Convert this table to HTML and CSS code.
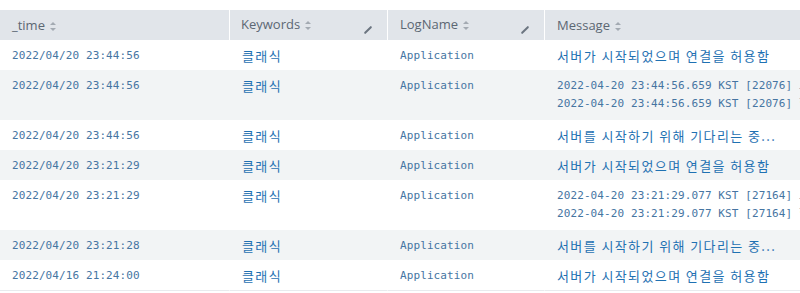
FILE: index.html
```html
<!DOCTYPE html>
<html>
<head>
    <title>Events</title>
    <link rel="stylesheet" href="styles.css">
</head>
<body>
    <div class="results">
        <table class="events">
            <thead>
                <tr>
                    <th class="col-time"><span class="label">_time</span><span class="sort"></span></th>
                    <th class="col-kw"><span class="label">Keywords</span><span class="sort"></span><span class="edit"></span></th>
                    <th class="col-log"><span class="label">LogName</span><span class="sort"></span><span class="edit"></span></th>
                    <th class="col-msg"><span class="label">Message</span><span class="sort"></span></th>
                </tr>
            </thead>
            <tbody>
                <tr>
                    <td class="mono time">2022/04/20 23:44:56</td>
                    <td class="link">클래식</td>
                    <td class="mono app">Application</td>
                    <td class="link">서버가 시작되었으며 연결을 허용함</td>
                </tr>
                <tr class="alt">
                    <td class="mono time">2022/04/20 23:44:56</td>
                    <td class="link">클래식</td>
                    <td class="mono app">Application</td>
                    <td class="mono msg">
                        <div class="line">2022-04-20 23:44:56.659 KST [22076] 로그 출력을 로그 수집 프로세스로 보냄</div>
                        <div class="line">2022-04-20 23:44:56.659 KST [22076] 힌트: 이제부터 로그는 "log" 디렉터리에 저장됨</div>
                    </td>
                </tr>
                <tr>
                    <td class="mono time">2022/04/20 23:44:56</td>
                    <td class="link">클래식</td>
                    <td class="mono app">Application</td>
                    <td class="link">서버를 시작하기 위해 기다리는 중...</td>
                </tr>
                <tr class="alt">
                    <td class="mono time">2022/04/20 23:21:29</td>
                    <td class="link">클래식</td>
                    <td class="mono app">Application</td>
                    <td class="link">서버가 시작되었으며 연결을 허용함</td>
                </tr>
                <tr>
                    <td class="mono time">2022/04/20 23:21:29</td>
                    <td class="link">클래식</td>
                    <td class="mono app">Application</td>
                    <td class="mono msg">
                        <div class="line">2022-04-20 23:21:29.077 KST [27164] 로그 출력을 로그 수집 프로세스로 보냄</div>
                        <div class="line">2022-04-20 23:21:29.077 KST [27164] 힌트: 이제부터 로그는 "log" 디렉터리에 저장됨</div>
                    </td>
                </tr>
                <tr class="alt">
                    <td class="mono time">2022/04/20 23:21:28</td>
                    <td class="link">클래식</td>
                    <td class="mono app">Application</td>
                    <td class="link">서버를 시작하기 위해 기다리는 중...</td>
                </tr>
                <tr class="last">
                    <td class="mono time">2022/04/16 21:24:00</td>
                    <td class="link">클래식</td>
                    <td class="mono app">Application</td>
                    <td class="link">서버가 시작되었으며 연결을 허용함</td>
                </tr>
            </tbody>
        </table>
    </div>
</body>
</html>
```

FILE: styles.css
```css
html, body {
    margin: 0;
    padding: 0;
    background: white;
    overflow: hidden;
}

body {
    padding-top: 10px;
    font-family: 'Open Sans', 'Noto Sans CJK KR', sans-serif;
}

.results {
    width: 800px;
    overflow: hidden;
}

.events {
    table-layout: fixed;
    border-collapse: separate;
    border-spacing: 0;
    width: 1144px;
}

.col-time { width: 229px; }
.col-kw { width: 158px; }
.col-log { width: 157px; }
.col-msg { width: 600px; }

th {
    box-sizing: border-box;
    height: 30px;
    padding: 0 12px;
    background: #e1e5ea;
    color: #5c6773;
    font-size: 13px;
    font-weight: normal;
    text-align: left;
    white-space: nowrap;
}

th.col-kw {
    padding-left: 11px;
}

th + th {
    border-left: 1px solid white;
}

.sort {
    display: inline-block;
    position: relative;
    width: 6px;
    height: 9px;
    margin-left: 5px;
    vertical-align: -1px;
}

.sort::before,
.sort::after {
    content: "";
    position: absolute;
    left: 0;
    border-left: 3px solid transparent;
    border-right: 3px solid transparent;
}

.sort::before {
    top: 0;
    border-bottom: 3.5px solid #a3aab2;
}

.sort::after {
    bottom: 0;
    border-top: 3.5px solid #a3aab2;
}

.edit {
    float: right;
    width: 2px;
    height: 10px;
    margin: 10px 6px 0 0;
    background: #6b7580;
    border-radius: 1px;
    transform: rotate(45deg);
}

td {
    box-sizing: border-box;
    padding: 7px 12px 5px 12px;
    vertical-align: top;
    line-height: 18px;
    white-space: nowrap;
    overflow: hidden;
}

td + td {
    border-left: 1px solid transparent;
}

tr.alt td {
    background: #f2f4f5;
}

tr.last td {
    border-bottom: 1px solid #e8ebee;
}

.mono {
    font-family: 'DejaVu Sans Mono', 'Noto Sans CJK KR', monospace;
    font-size: 11px;
    letter-spacing: 0.1px;
    color: #4675a2;
}

.link {
    font-family: 'Noto Sans CJK KR', sans-serif;
    font-size: 13px;
    letter-spacing: 1.4px;
    color: #1f71b2;
}

.msg .line {
    line-height: 18px;
}

tr:has(.msg) td {
    padding-bottom: 7px;
}
```
